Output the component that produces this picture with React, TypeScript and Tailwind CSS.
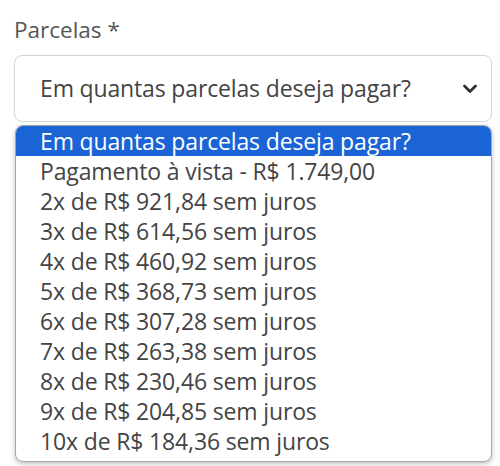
import React from 'react';

const options = [
  'Em quantas parcelas deseja pagar?',
  'Pagamento à vista - R$ 1.749,00',
  '2x de R$ 921,84 sem juros',
  '3x de R$ 614,56 sem juros',
  '4x de R$ 460,92 sem juros',
  '5x de R$ 368,73 sem juros',
  '6x de R$ 307,28 sem juros',
  '7x de R$ 263,38 sem juros',
  '8x de R$ 230,46 sem juros',
  '9x de R$ 204,85 sem juros',
  '10x de R$ 184,36 sem juros',
];

export default function App() {
  return (
    <div className="w-[500px] h-[466px] bg-white px-[14px] pt-[15px] font-['Open_Sans',sans-serif] text-[#444]">
      <div className="text-[22.5px] leading-[30px] text-[#555]">Parcelas *</div>

      {/* select */}
      <div className="mt-[10px] h-[67px] w-[478px] rounded-[8px] border border-[#d4d4d4] bg-white flex items-center justify-between pl-[25px] pr-[13px]">
        <span className="text-[23px] tracking-[-0.15px]">Em quantas parcelas deseja pagar?</span>
        <svg width="16" height="12" viewBox="0 0 16 12" fill="none">
          <path d="M2.5 3 L8 8.5 L13.5 3" stroke="#333" strokeWidth="2.8" strokeLinecap="round" strokeLinejoin="round" />
        </svg>
      </div>

      {/* dropdown list */}
      <ul className="mt-[3px] ml-[1px] w-[477px] pb-[5px] rounded-[8px] border border-[#a8a8a8] bg-white overflow-hidden shadow-[0_2px_5px_rgba(0,0,0,0.25)]">
        {options.map((o, i) => (
          <li
            key={o}
            className={`h-[30px] flex items-center pl-[24px] text-[23px] tracking-[-0.15px] ${
              i === 0 ? 'bg-[#1a64d6] text-white' : 'text-[#444]'
            }`}
          >
            {o}
          </li>
        ))}
      </ul>
    </div>
  );
}
